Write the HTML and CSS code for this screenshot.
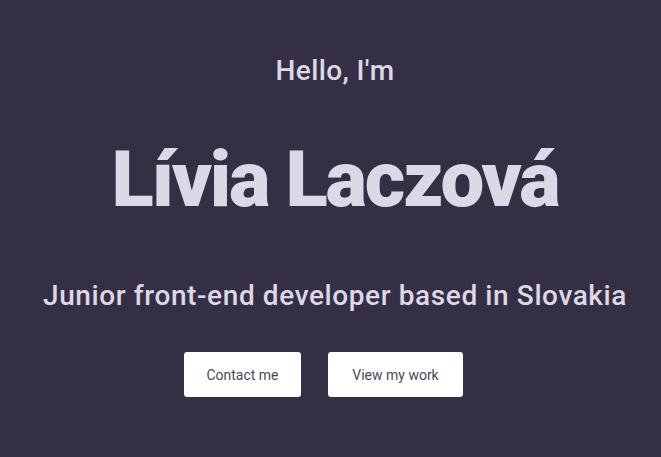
FILE: index.html
```html
<!DOCTYPE html>
<html lang="sk">
<head>
<meta charset="utf-8">
<title>Lívia Laczová</title>
<link rel="stylesheet" href="styles.css">
</head>
<body>
<main class="hero">
  <p class="hello">Hello, I'm</p>
  <h1 class="name">Lívia Laczová</h1>
  <p class="role">Junior front-end developer based in Slovakia</p>
  <div class="actions">
    <a class="btn btn-contact" href="#contact">Contact me</a>
    <a class="btn btn-work" href="#work">View my work</a>
  </div>
</main>
</body>
</html>
```
FILE: styles.css
```css
html, body {
  margin: 0;
  padding: 0;
  height: 100%;
}
body {
  background: #342f44;
  color: #dcd8e6;
  font-family: Roboto, "Open Sans", sans-serif;
}
.hero {
  display: flex;
  flex-direction: column;
  align-items: center;
  padding: 53px 0 0 9px;
}
.hello {
  margin: 0;
  font-size: 28px;
  line-height: 36px;
  font-weight: 500;
  letter-spacing: 0.4px;
}
.name {
  margin: 51px 0 0;
  font-size: 78px;
  line-height: 80px;
  font-weight: 900;
  letter-spacing: -2.2px;
}
.role {
  margin: 58px 0 0;
  font-size: 28px;
  line-height: 36px;
  font-weight: 500;
  letter-spacing: 0.6px;
}
.actions {
  display: flex;
  gap: 27px;
  margin: 38px 23px 0 0;
}
.btn {
  display: flex;
  align-items: center;
  justify-content: center;
  height: 45px;
  background: #ffffff;
  color: #4b4858;
  font-size: 14px;
  text-decoration: none;
  border-radius: 3px;
}
.btn-contact { width: 117px; }
.btn-work { width: 135px; }
```
